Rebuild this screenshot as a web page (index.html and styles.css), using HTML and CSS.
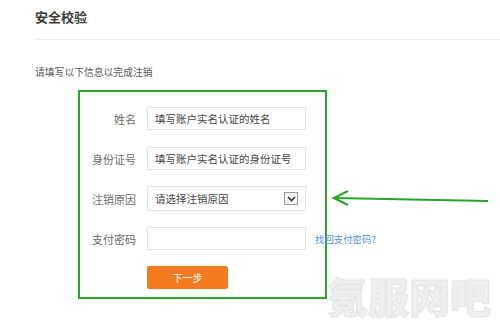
FILE: index.html
```html
<!DOCTYPE html>
<html lang="zh">
<head>
<meta charset="utf-8">
<link rel="stylesheet" href="styles.css">
</head>
<body>
<div class="page">
  <div class="header"><h1 class="title">安全校验</h1></div>
  <p class="intro">请填写以下信息以完成注销</p>
  <div class="box">
    <div class="row">
      <span class="label">姓名</span>
      <div class="field">填写账户实名认证的姓名</div>
    </div>
    <div class="row">
      <span class="label">身份证号</span>
      <div class="field">填写账户实名认证的身份证号</div>
    </div>
    <div class="row">
      <span class="label">注销原因</span>
      <div class="field select"><span>请选择注销原因</span>
        <span class="caret"><svg width="9" height="6" viewBox="0 0 9 6"><path d="M1 1 L4.5 4.5 L8 1" fill="none" stroke="#333" stroke-width="1.6"/></svg></span>
      </div>
    </div>
    <div class="row">
      <span class="label">支付密码</span>
      <div class="field"></div>
      <a class="link">找回支付密码？</a>
    </div>
    <div class="row btnrow">
      <span class="label"></span>
      <button class="btn">下一步</button>
    </div>
  </div>
  <svg class="arrow" width="158" height="20" viewBox="0 0 158 20">
    <path d="M2 9 L156 12" stroke="#2aa52a" stroke-width="2.2" fill="none"/>
    <path d="M16 2 L2 9 L16 16" stroke="#2aa52a" stroke-width="2.2" fill="none"/>
  </svg>
  <div class="watermark">氪服网吧</div>
</div>
</body>
</html>
```
FILE: styles.css
```css
body {
  margin: 0;
  background: #fff;
  font-family: "Noto Sans CJK SC", "Liberation Sans", sans-serif;
}
.page {
  padding-left: 35px;
  position: relative;
  height: 330px;
  box-sizing: border-box;
}
.header {
  box-sizing: border-box;
  height: 40px;
  border-bottom: 1px solid #ececec;
}
.title {
  margin: 0;
  padding-top: 7px;
  font-size: 13px;
  line-height: 19px;
  font-weight: bold;
  color: #3a3a3a;
}
.intro {
  margin: 24px 0 0 0;
  font-size: 9.8px;
  line-height: 16px;
  color: #555;
}
.box {
  margin: 10px 0 0 43px;
  width: 249px;
  height: 209px;
  box-sizing: border-box;
  border: 2px solid #2aa52a;
  padding-top: 15px;
  display: flex;
  flex-direction: column;
  gap: 17px;
}
.row {
  display: flex;
  align-items: center;
  gap: 11px;
  height: 23px;
}
.label {
  width: 56px;
  text-align: right;
  font-size: 11px;
  color: #6a6a6a;
  flex: none;
}
.field {
  width: 159px;
  height: 23px;
  box-sizing: border-box;
  border: 1px solid #e2e2e2;
  padding-left: 7px;
  font-size: 10.5px;
  line-height: 21px;
  color: #444;
  flex: none;
  background: #fff;
}
.select {
  height: 25px;
  display: flex;
  align-items: center;
  justify-content: space-between;
  padding-right: 7px;
}
.caret {
  width: 14px;
  height: 13px;
  box-sizing: border-box;
  border: 1px solid #9a9a9a;
  background: #f4f4f4;
  display: flex;
  align-items: center;
  justify-content: center;
}
.link {
  margin-left: -2px;
  font-size: 9.4px;
  color: #4a8ed8;
  white-space: nowrap;
}
.btnrow {
  margin-top: -1px;
}
.btn {
  width: 81px;
  height: 23px;
  border: none;
  border-radius: 2px;
  background: #f47c20;
  color: #fff;
  font-family: inherit;
  font-size: 10px;
  padding: 0;
}
.arrow {
  position: absolute;
  left: 332px;
  top: 189px;
}
.watermark {
  position: absolute;
  left: 327px;
  top: 267px;
  font-size: 41px;
  font-weight: 900;
  color: #efefef;
  -webkit-text-stroke: 1px #e4e4e4;
  line-height: 56px;
  white-space: nowrap;
}
```
